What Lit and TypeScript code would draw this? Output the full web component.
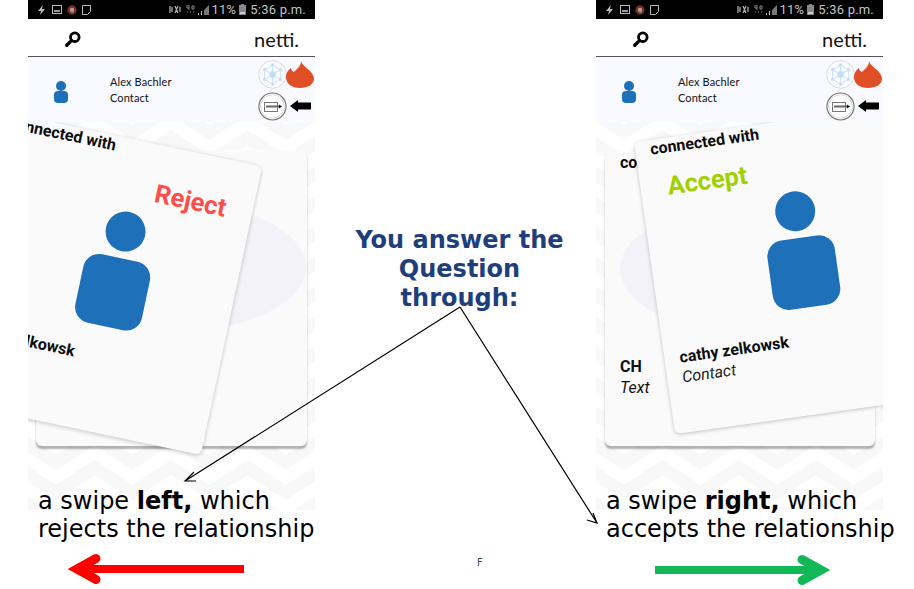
import { LitElement, html, css, svg } from "lit";
import { customElement, property } from "lit/decorators.js";

const person = html`<div class="person"><div class="head"></div><div class="torso"></div></div>`;

@customElement("phone-panel")
class PhonePanel extends LitElement {
  @property() mode = "left";
  static styles = css`
    :host { display: block; width: 287px; height: 510px; font-family: Lato, sans-serif; color: #111; }
    .status { height: 19px; background: #000; color: #c4c4c4; display: flex; align-items: center; font: 13px/19px Roboto, sans-serif; letter-spacing: .2px; padding: 0 9px 0 7px; white-space: nowrap; }
    .status svg { display: block; flex: none; }
    .sl { display: flex; gap: 5px; align-items: center; }
    .sr { margin-left: auto; display: flex; align-items: center; }
    .head-bar { background: #fff; border-bottom: 1px solid #555; box-sizing: border-box; height: 38px; display: flex; align-items: center; padding: 2px 16px 0 37px; }
    .brand { margin-left: auto; font-size: 20px; line-height: 24px; color: #111; }
    .contact { height: 65px; background: #f8faff; display: flex; position: relative; z-index: 2; }
    .mini { margin: 24px 0 0 26px; width: 14px; display: flex; flex-direction: column; align-items: center; }
    .mini i { display: block; width: 10px; height: 10px; border-radius: 50%; background: #1e70b8; }
    .mini b { display: block; width: 14px; height: 12px; border-radius: 4px; background: #1e70b8; }
    .who { margin: 17px 0 0 42px; font-size: 11px; letter-spacing: .1px; line-height: 16px; }
    .tools { margin-left: auto; padding-top: 3px; display: grid; grid-template-columns: 28px 29px; grid-auto-rows: 28px; row-gap: 4px; place-items: center; }
    .body { position: relative; height: 388px; overflow: hidden; background: #fff; padding: 28px 8px 0; box-sizing: border-box; }
    .body.right { padding: 30px 8px 0 9px; }
    .pattern { position: absolute; left: 0; top: 0; width: 100%; height: 100%; }
    .back { position: relative; height: 296px; border-radius: 6px; background: #fafafa; box-shadow: 0 3px 2px rgba(0,0,0,.3); padding: 2px 0 0 15px; box-sizing: border-box; font-family: Roboto, sans-serif; overflow: hidden; }
    .right .back { height: 294px; }
    .ellipse { position: absolute; left: 15px; top: 53px; width: 255px; height: 128px; border-radius: 50%; background: #f2f2f8; }
    .label { position: relative; font-weight: 700; font-size: 16px; line-height: 18px; white-space: nowrap; color: #0c0c0c; }
    .ch { position: relative; margin-top: 185px; font-weight: 700; font-size: 16px; line-height: 20px; }
    .txt { position: relative; font-style: italic; font-size: 16px; line-height: 20px; margin-top: 1px; }
    .front { position: absolute; width: 272px; height: 295px; box-sizing: border-box; background: #fafafa; border-radius: 6px; box-shadow: 0 1px 4px rgba(0,0,0,.24); transform-origin: 0 0; padding: 1px 0 0 15px; font-family: Roboto, sans-serif; }
    .front.rej { left: -32px; top: -12px; transform: rotate(12deg); }
    .front.acc { left: 38px; top: 20px; transform: rotate(-8deg); }
    .stamp { font-weight: 700; font-size: 25.5px; line-height: 30px; margin-top: 14px; white-space: nowrap; }
    .rej .stamp { margin-left: 158px; color: #ff4d4d; }
    .acc .stamp { margin-left: 12px; color: #a0d000; }
    .person { margin: 8px 0 0 101px; width: 68px; display: flex; flex-direction: column; align-items: center; gap: 7px; }
    .rej .person { margin: 9px 0 0 103px; }
    .head { width: 40px; height: 40px; border-radius: 50%; background: #1e70b8; }
    .torso { width: 68px; height: 70px; border-radius: 16px; background: #1e70b8; }
    .name { margin-top: 23px; font-weight: 700; font-size: 16px; line-height: 18px; white-space: nowrap; color: #0c0c0c; }
    .rej .name { margin: 22px 0 0 2px; }
    .role { margin-top: 1px; font-style: italic; font-size: 16px; line-height: 20px; color: #222; }
  `;

  render() {
    const isLeft = this.mode === "left";
    return html`
      <div class="status">
        <div class="sl">
          <svg width="8" height="10" viewBox="0 0 8 10" style="margin-left:2px"><path d="M6 0 1 6h3l-1 4 5-6H5z" fill="#bbb"/></svg>
          <svg width="10" height="9" viewBox="0 0 10 9" style="margin-left:2px"><rect x=".5" y=".5" width="9" height="8" fill="none" stroke="#bbb"/><path d="M2 7h6V5H2z" fill="#999"/></svg>
          <svg width="10" height="10" viewBox="0 0 11 11"><circle cx="5.500" cy="5.500" r="5.200" fill="#7c2a2a"/><circle cx="5.500" cy="5.500" r="2.400" fill="#b89a9a"/><path d="M3.500 6.500q2 2 4 1" stroke="#3fae5a" stroke-width="1.400" fill="none"/></svg>
          <svg width="9" height="10" viewBox="0 0 9 10"><path d="M.5.500h8v6l-3 3h-5z" fill="none" stroke="#bbb"/></svg>
        </div>
        <div class="sr">
          <svg width="12" height="9" viewBox="0 0 12 9"><path d="M1 1v7M3 2v5M6 1l3 7M9 1 6 8M11 2v5" stroke="#aaa" stroke-width="1.300"/></svg>
          <svg width="9" height="9" viewBox="0 0 9 9" style="margin-left:5px"><path d="M1 0v3h2M3 0v5M6 1h2v3H6zM1 7h1M4 7h1M7 7h1" stroke="#888" fill="none"/></svg>
          <svg width="12" height="10" viewBox="0 0 12 10" style="margin-left:3px"><path d="M0 10h1V8H0zM3 10h1V6H3z" fill="#bbb"/><path d="M6 10V5l5-5v10z" fill="#777"/></svg>
          <span style="margin-left:2px">11%</span>
          <svg width="7" height="11" viewBox="0 0 7 11" style="margin:0 4px 0 3px"><path d="M2 0h3v1h2v10H0V1h2z" fill="#888"/><path d="M1 8h5v2H1z" fill="#ccc"/></svg>
          <span>5:36 p.m.</span>
        </div>
      </div>
      <div class="head-bar">
        <svg width="16" height="16" viewBox="0 0 16 16"><circle cx="9.800" cy="6.200" r="4.300" fill="none" stroke="#000" stroke-width="2.800"/><path d="M6.400 9.600 1.800 14.200" stroke="#000" stroke-width="3.400" stroke-linecap="round"/></svg>
        <span class="brand">netti.</span>
      </div>
      <div class="contact">
        <div class="mini"><i></i><b></b></div>
        <div class="who">Alex Bachler<br />Contact</div>
        <div class="tools">
          <svg width="29" height="29" viewBox="0 0 29 29">
            <circle cx="14.500" cy="14.500" r="13.800" fill="#fbfcff" stroke="#d6dade"/>
            <g stroke="#cfe3f8" stroke-width="1" fill="#c4ddf7">
              <path d="M14.500 5v19M6.500 9.700l16 9.600M6.500 19.300l16-9.600M14.500 5l8 4.700v9.600l-8 4.700-8-4.700V9.700z" fill="none"/>
              <circle cx="14.500" cy="14.500" r="3.200"/><circle cx="14.500" cy="5" r="1.500"/><circle cx="14.500" cy="24" r="1.500"/><circle cx="6.500" cy="9.700" r="1.500"/><circle cx="22.500" cy="9.700" r="1.500"/><circle cx="6.500" cy="19.300" r="1.500"/><circle cx="22.500" cy="19.300" r="1.500"/>
            </g>
          </svg>
          <svg width="29" height="29" viewBox="0 0 29 29"><path d="M15 1c1 4 5 6 8 9 3 3 5 6 5 9 0 5-6 9-14 9C6 28 0 24 0 17c0-4 2-7 5-9 0 2 1 3 3 4 3-3 7-6 7-11z" fill="#e04e26"/></svg>
          <svg width="29" height="29" viewBox="0 0 29 29">
            <circle cx="14.500" cy="14.500" r="13.500" fill="#fff" stroke="#777" stroke-width="1.200"/>
            <circle cx="14.500" cy="14.500" r="11.800" fill="none" stroke="#ddd"/>
            <rect x="6.500" y="10.500" width="13" height="9" fill="#fff" stroke="#777"/>
            <path d="M8 14.500h13" stroke="#666" stroke-width="2"/>
            <path d="m21 12.500 3 2-3 2z" fill="#111"/>
          </svg>
          <svg width="21" height="12" viewBox="0 0 21 12"><path d="M0 6 8 0v2.500h13v7H8V12z" fill="#000"/></svg>
        </div>
      </div>
      <div class="body ${this.mode}">
        <svg class="pattern">
          <defs>
            <pattern id="hb-${this.mode}" width="76.600" height="30" patternUnits="userSpaceOnUse" x="28" y="8">
              <g fill="#f8f8f8">
                ${[-60, -30, 0, 30, 60].map(
                  (y) => svg`<path d="M0 ${y + 25}L38.300 ${y}V${y + 15}L0 ${y + 40}Z"/><path d="M38.300 ${y}L76.600 ${y + 25}V${y + 40}L38.300 ${y + 15}Z"/>`,
                )}
              </g>
            </pattern>
          </defs>
          <rect width="100%" height="100%" fill="url(#hb-${this.mode})"/>
        </svg>
        <div class="back">
          <div class="ellipse"></div>
          <div class="label">connected with</div>
          <div class="ch">CH</div>
          <div class="txt">Text</div>
        </div>
        <div class="front ${isLeft ? "rej" : "acc"}">
          <div class="label">connected with</div>
          <div class="stamp">${isLeft ? "Reject" : "Accept"}</div>
          ${person}
          <div class="name">cathy zelkowsk</div>
          <div class="role">Contact</div>
        </div>
      </div>
    `;
  }
}

@customElement("app-root")
class AppRoot extends LitElement {
  static styles = css`
    :host { display: block; position: relative; width: 914px; height: 589px; overflow: hidden; background: #fff; font-family: "DejaVu Sans", sans-serif; color: #000; }
    .stage { display: grid; grid-template-columns: 287px 281px 287px; padding-left: 28px; }
    .side { display: flex; flex-direction: column; min-width: 0; }
    .caption { position: relative; z-index: 3; margin: -23px 0 0 10px; font-size: 24px; line-height: 28px; white-space: nowrap; }
    .sweep { display: block; margin-top: 8px; }
    .question { padding: 226px 0 0 8px; margin: 0; text-align: center; font-family: inherit; font-weight: 700; font-size: 24px; line-height: 29px; color: #1f3f7a; }
    .tiny { position: absolute; left: 477px; top: 557px; font: 10px/12px "DejaVu Sans", sans-serif; color: #444; }
    .lines { position: absolute; left: 0; top: 0; z-index: 4; pointer-events: none; }
  `;

  render() {
    return html`
      <div class="stage">
        <div class="side">
          <phone-panel mode="left"></phone-panel>
          <div class="caption">a swipe <b>left,</b> which<br />rejects the relationship</div>
          <svg class="sweep" width="287" height="36" viewBox="0 0 287 36">
            <path d="M216 18H50" stroke="#f00" stroke-width="8"/>
            <path d="M68 7.500 49 18l19 10.500" stroke="#f00" stroke-width="9" fill="none" stroke-linecap="round"/>
          </svg>
        </div>
        <h1 class="question">You answer the<br />Question<br />through:</h1>
        <div class="side">
          <phone-panel mode="right"></phone-panel>
          <div class="caption">a swipe <b>right,</b> which<br />accepts the relationship</div>
          <svg class="sweep" width="287" height="36" viewBox="0 0 287 36">
            <path d="M59 19H224" stroke="#12b856" stroke-width="8"/>
            <path d="M206 8.500 225 19 206 29.500" stroke="#12b856" stroke-width="9" fill="none" stroke-linecap="round"/>
          </svg>
        </div>
      </div>
      <div class="tiny">F</div>
      <svg class="lines" width="914" height="589" viewBox="0 0 914 589" fill="none" stroke="#000" stroke-width="1.200">
        <path d="M460 307 185 481M194 472l-9 9 11 0"/>
        <path d="M460 307 597 523M593 513l4 10-10-3"/>
      </svg>
    `;
  }
}
